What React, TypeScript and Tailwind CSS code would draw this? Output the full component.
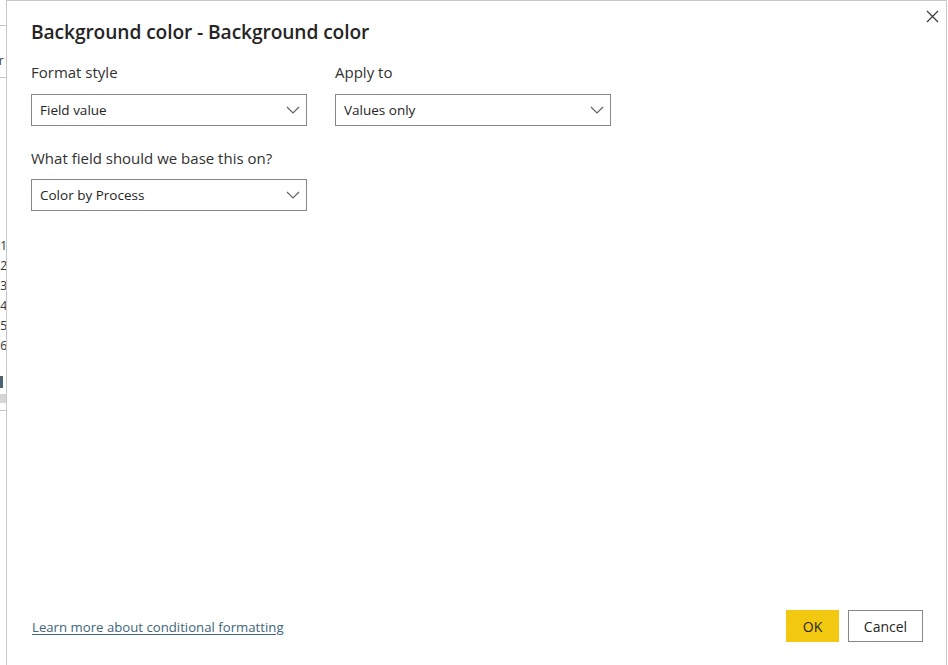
import React from "react";

const Chevron = () => (
  <svg width="14" height="8" viewBox="0 0 14 8" fill="none" className="shrink-0">
    <path d="M1 1 L7 7 L13 1" stroke="#605e5c" strokeWidth="1.1" />
  </svg>
);

const Select = ({ value }: { value: string }) => (
  <div className="flex h-[32px] w-[276px] items-center justify-between border border-[#8a8886] pl-[8px] pr-[6px] text-[13.5px] text-[#252423]">
    <span>{value}</span>
    <Chevron />
  </div>
);

export default function App() {
  return (
    <div
      className="flex h-[665px] w-[948px] overflow-hidden bg-white"
      style={{ fontFamily: '"Open Sans", "Noto Sans", sans-serif' }}
    >
      {/* background page strip */}
      <div className="relative w-[6px] shrink-0 overflow-hidden text-[12px] text-[#333]">
        <div className="absolute left-0 top-[25px] h-px w-[6px] bg-[#c8c8c8]" />
        <div className="absolute left-[-8px] top-[52px]">ar</div>
        <div className="absolute left-0 top-[77px] h-px w-[6px] bg-[#c8c8c8]" />
        <div className="absolute left-[-6px] top-[236px] leading-[20px]">
          <div>x1</div>
          <div>x2</div>
          <div>x3</div>
          <div>x4</div>
          <div>x5</div>
          <div>x6</div>
        </div>
        <div className="absolute left-0 top-[376px] h-[12px] w-[3px] bg-[#4a6272]" />
        <div className="absolute left-0 top-[394px] h-[9px] w-[6px] bg-[#d6d6d6]" />
        <div className="absolute left-0 top-[410px] h-px w-[6px] bg-[#c8c8c8]" />
      </div>

      {/* dialog */}
      <div className="relative flex h-[670px] w-[941px] shrink-0 flex-col border border-[#c8c8c8] bg-white pl-[24px] pr-[24px]">
        <button className="absolute right-[5px] top-[6px] flex h-[18px] w-[18px] items-center justify-center">
          <svg width="13" height="13" viewBox="0 0 13 13">
            <path d="M1 1 L12 12 M12 1 L1 12" stroke="#3b3a39" strokeWidth="1.2" />
          </svg>
        </button>

        <h1 className="mt-[17px] text-[19.2px] font-semibold leading-[28px] tracking-[-0.1px] text-[#252423]">
          Background color - Background color
        </h1>

        <div className="mt-[15px] flex gap-[28px]">
          <div className="flex flex-col">
            <label className="text-[15px] leading-[22px] text-[#323130]">Format style</label>
            <div className="mt-[11px]">
              <Select value="Field value" />
            </div>
          </div>
          <div className="flex flex-col">
            <label className="text-[15px] leading-[22px] text-[#323130]">Apply to</label>
            <div className="mt-[11px]">
              <Select value="Values only" />
            </div>
          </div>
        </div>

        <label className="mt-[21px] text-[15px] leading-[22px] text-[#323130]">
          What field should we base this on?
        </label>
        <div className="mt-[10px]">
          <Select value="Color by Process" />
        </div>

        <div className="mt-auto mb-[27px] flex items-center justify-between">
          <a className="ml-[1px] mt-[4px] text-[13.2px] text-[#41657a] underline underline-offset-2">
            Learn more about conditional formatting
          </a>
          <div className="-mr-px flex gap-[9px]">
            <button className="h-[32px] w-[53px] bg-[#f2c811] text-[14px] text-[#252423]">OK</button>
            <button className="h-[32px] w-[75px] border border-[#8a8886] bg-white text-[14px] text-[#252423]">
              Cancel
            </button>
          </div>
        </div>
      </div>
    </div>
  );
}
